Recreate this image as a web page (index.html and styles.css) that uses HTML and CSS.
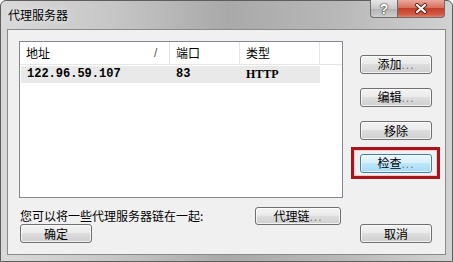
FILE: index.html
```html
<!DOCTYPE html>
<html lang="zh-CN">
<head>
    <meta charset="UTF-8">
    <title>代理服务器</title>
    <link rel="stylesheet" href="styles.css">
</head>
<body>
    <div class="window">
        <div class="titlebar">
            <span class="title">代理服务器</span>
            <div class="caption-buttons">
                <span class="cap-btn help">?</span>
                <span class="cap-btn close">
                    <svg width="14" height="11" viewBox="0 0 14 11">
                        <path d="M3 2 L11 9 M11 2 L3 9" stroke="#5a1f17" stroke-width="4" stroke-linecap="round"/>
                        <path d="M3 2 L11 9 M11 2 L3 9" stroke="#ffffff" stroke-width="2.2" stroke-linecap="round"/>
                    </svg>
                </span>
            </div>
        </div>

        <div class="client">
            <div class="top">
                <div class="listbox">
                    <div class="row header">
                        <span class="col addr">地址<span class="sort">/</span></span>
                        <span class="col port">端口</span>
                        <span class="col type">类型</span>
                    </div>
                    <div class="row item">
                        <span class="col addr">122.96.59.107</span>
                        <span class="col port">83</span>
                        <span class="col type proto">HTTP</span>
                    </div>
                </div>
                <div class="side">
                    <button class="btn">添加<span class="dots">...</span></button>
                    <button class="btn">编辑<span class="dots">...</span></button>
                    <button class="btn">移除</button>
                    <span class="highlight">
                        <button class="btn focused">检查<span class="dots">...</span></button>
                    </span>
                </div>
            </div>

            <div class="bottom">
                <span class="hint">您可以将一些代理服务器链在一起:</span>
                <button class="btn chain">代理链<span class="dots">...</span></button>
                <button class="btn ok">确定</button>
                <button class="btn cancel">取消</button>
            </div>
        </div>
    </div>
</body>
</html>
```

FILE: styles.css
```css
body {
    margin: 0;
    background: #ffffff;
    font-family: "Noto Sans CJK SC", "Liberation Sans", sans-serif;
    font-size: 12px;
    color: #000;
}
.window {
    width: 453px;
    height: 262px;
    box-sizing: border-box;
    border: 1px solid #5e5e5e;
    border-radius: 6px 6px 0 0;
    padding: 0 6px 6px 6px;
    background: linear-gradient(to right, #d9d9d9 0%, #c6c6c6 25%, #a9a9a9 50%, #b8b8b8 75%, #d2d2d2 100%);
    display: flex;
    flex-direction: column;
}
.titlebar {
    height: 28px;
    display: flex;
    align-items: center;
    flex: none;
}
.title {
    padding-left: 1px;
    font-size: 12px;
    line-height: 14px;
    text-shadow: 0 0 6px rgba(255,255,255,0.8);
}
.caption-buttons {
    margin-left: auto;
    margin-right: 1px;
    align-self: flex-start;
    margin-top: -1px;
    display: flex;
}
.cap-btn {
    height: 18px;
    box-sizing: border-box;
    border: 1px solid #6d6d6d;
    border-top: none;
    display: flex;
    align-items: center;
    justify-content: center;
}
.help {
    width: 27px;
    border-radius: 0 0 0 4px;
    border-right: none;
    background: linear-gradient(#e6e6e6, #c9c9c9 50%, #b3b3b3 51%, #cfcfcf);
    color: #fff;
    font-family: "Liberation Sans", sans-serif;
    font-weight: bold;
    font-size: 14px;
    text-shadow: 0 0 1px #333, 0 0 1px #333, 0 0 2px #555;
}
.close {
    width: 48px;
    border-radius: 0 0 4px 0;
    background: linear-gradient(#e9a99c, #d7715f 45%, #c2402b 50%, #d35c44 85%, #e0836c);
}
.client {
    flex: 1;
    border: 1px solid #8a8a8a;
    background: #f0f0f0;
    padding: 11px 0 0 11px;
}
.top {
    display: flex;
}
.listbox {
    width: 324px;
    height: 157px;
    box-sizing: border-box;
    border: 1px solid #828790;
    background: #fff;
}
.row {
    display: flex;
}
.header {
    height: 23px;
    box-sizing: border-box;
    border-bottom: 1px solid #e5e5e5;
    align-items: center;
}
.header .col {
    border-right: 1px solid #e5e5e5;
    height: 22px;
    line-height: 22px;
}
.col {
    box-sizing: border-box;
    padding-left: 6px;
    position: relative;
}
.col.addr { width: 150px; }
.col.port { width: 70px; }
.col.type { width: 80px; }
.sort {
    position: absolute;
    left: 134px;
    top: 0;
    color: #555;
    font-family: "Liberation Sans", sans-serif;
}
.item {
    margin: 1px 0 0 1px;
    width: 299px;
    height: 17px;
    line-height: 17px;
    background: #e9e9e9;
    font-family: "Liberation Mono", monospace;
    font-weight: bold;
    font-size: 12px;
}
.item .col.addr { width: 149px; }
.item .proto {
    font-family: "Liberation Serif", serif;
    font-size: 12px;
}
.side {
    margin-left: 17px;
    margin-top: 14px;
    display: flex;
    flex-direction: column;
    gap: 14px;
}
.btn {
    width: 72px;
    height: 19px;
    padding: 0;
    border: 1px solid #707070;
    border-radius: 3px;
    background: linear-gradient(#f2f2f2, #ebebeb 45%, #dddddd 50%, #cfcfcf);
    box-shadow: inset 0 0 0 1px rgba(255,255,255,0.7);
    font-family: "Noto Sans CJK SC", sans-serif;
    font-size: 12px;
    line-height: 15px;
    color: #000;
}
.dots {
    color: #777;
    letter-spacing: 1px;
    font-family: "Liberation Sans", sans-serif;
}
.highlight {
    display: flex;
    margin: -7px -8px -6px -9px;
    padding: 4px 5px 3px 6px;
    border: 3px solid #a8141c;
    box-shadow: inset 0 0 0 1px rgba(255,120,120,0.35);
}
.btn.focused {
    border-color: #3c7fb1;
    background: linear-gradient(#eaf6fd, #d9f0fc 45%, #bee6fd 50%, #a7d9f5);
}
.bottom {
    margin: 9px 0 0 1px;
    display: grid;
    grid-template-columns: 235px 86px 19px 72px;
    grid-template-rows: 17px 19px;
}
.hint {
    grid-column: 1;
    grid-row: 1;
    align-self: end;
    line-height: 14px;
    padding-bottom: 1px;
}
.btn.chain {
    grid-column: 2;
    grid-row: 1;
    width: 86px;
    height: 18px;
}
.btn.ok {
    grid-column: 1;
    grid-row: 2;
}
.btn.cancel {
    grid-column: 4;
    grid-row: 2;
}
```
